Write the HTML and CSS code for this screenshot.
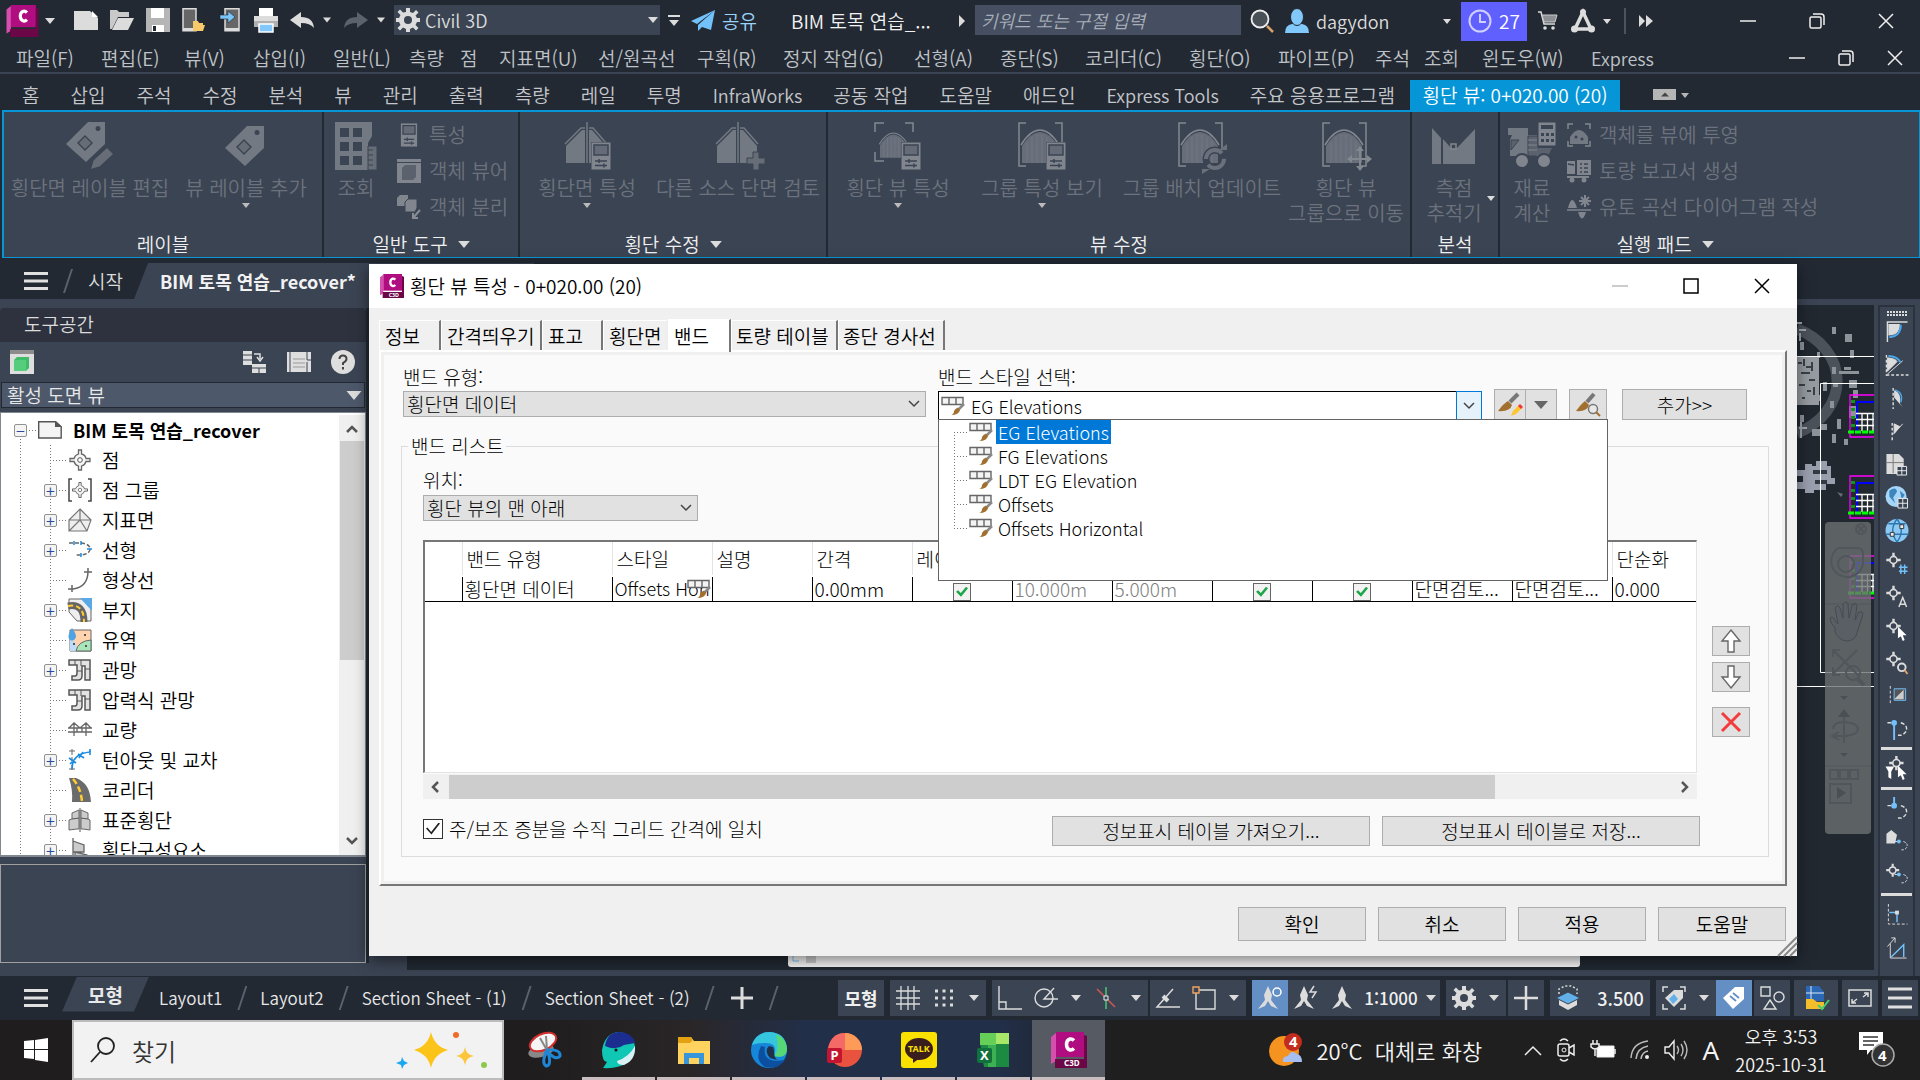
FILE: index.html
```html
<!DOCTYPE html>
<html lang="ko">
<head>
<meta charset="utf-8">
<title>Civil 3D - BIM 토목 연습_recover</title>
<link rel="stylesheet" href="styles.css">
</head>
<body>
<svg class="defs" aria-hidden="true">
  <defs>
    <symbol id="down" viewBox="0 0 10 6"><path d="M0 0h10L5 6z" fill="currentColor"/></symbol>
    <symbol id="c3d" viewBox="0 0 36 36"><path d="M0 5L5 1v28l-5 3z" fill="#d64fae"/><path d="M5 0h28v25H5z" fill="#b00d80"/><path d="M33 3l3 1v32H4v-9h29z" fill="#6b0647"/><path d="M23 8.500q-2-2-4-1.500-3.500 1-3.500 5.500t3.500 5.500q2 .5 4-1.500" fill="none" stroke="#fff" stroke-width="3.500"/></symbol>
    <symbol id="min" viewBox="0 0 16 16"><path d="M0 8h16" stroke="currentColor" stroke-width="1.500"/></symbol>
    <symbol id="restore" viewBox="0 0 16 16"><g fill="none" stroke="currentColor" stroke-width="1.500"><rect x="1" y="4" width="11" height="11" rx="1.500"/><path d="M4 1h8q3 0 3 3v8"/></g></symbol>
    <symbol id="close" viewBox="0 0 16 16"><path d="M1 1l14 14M15 1L1 15" stroke="currentColor" stroke-width="1.500"/></symbol>
    <symbol id="burger" viewBox="0 0 24 18"><path d="M0 1.500h24M0 9h24M0 16.500h24" stroke="#e0e0e0" stroke-width="3"/></symbol>
    <symbol id="gear" viewBox="0 0 24 24"><path fill="#dcdcdc" fill-rule="evenodd" d="M10 0h4v4l3 1 3-3 2.500 2.500-3 3L21 10h3v4h-3l-1.500 3 3 3L20 22.500l-3-3-3 1.500v3h-4v-3l-3-1.500-3 3L1.500 20l3-3L3 14H0v-4h3l1.500-3-3-3L4 1.500l3 3L10 4zM12 8a4 4 0 100 8 4 4 0 000-8z"/></symbol>
    <symbol id="tag" viewBox="0 0 48 48"><path fill="#737982" fill-rule="evenodd" d="M22 0h17v22L20 40 0 22zM32 4a2.500 2.500 0 100 5 2.500 2.500 0 000-5zM19 13l-8 8 8 8 8-8z"/><path d="M19 15l-6 6 6 6 6-6z" fill="#666d77"/></symbol>
    <symbol id="section" viewBox="0 0 48 48"><path fill="#737982" d="M3 24L19 8h3v33H3zM26 8h3l14 16v17H26z"/><path d="M2 22L18 6h4M26 6h4l14 16M24 0v41" fill="none" stroke="#737982" stroke-width="1.500"/></symbol>
    <symbol id="arch" viewBox="0 0 48 48"><path d="M4 24q9-14 18-14t18 14v17H4z" fill="#676e79"/><path d="M3 23Q12 8 22 8t19 15" stroke="#838890" stroke-width="1.500" fill="none"/><path d="M9 20v21M14 15v26M19 13v28M24 13v28M29 15v26M34 19v22" stroke="#737984" stroke-width="1"/></symbol>
    <symbol id="sheet" viewBox="0 0 20 28"><path d="M0 0h20v28H0z" fill="#80858e" stroke="#3b4453"/><path d="M3 3h14v10H3z" fill="#666c77" stroke="#3b4453" stroke-width="1.500"/><path d="M4 19h12M4 23.500h12M8 17v4M13 21.500v4" stroke="#3b4453" stroke-width="1.500"/></symbol>
    <symbol id="bracket" viewBox="0 0 48 48"><path d="M8 1H1v43h7M37 1h7v43h-7" fill="none" stroke="#83888f" stroke-width="1.500"/></symbol>
    <symbol id="band" viewBox="0 0 24 20"><path d="M1 1.500h21v7H1zM8 1.500v7M15 1.500v7" fill="#f4f4f4" stroke="#666" stroke-width="1.400"/><path d="M23 8l-6 6" stroke="#8a8a8a" stroke-width="2.500"/><path d="M17 11.500l2 2.500q-1 5-9 5 3-1 3-4 1-2.500 4-3.500z" fill="#a2702e"/></symbol>
    <symbol id="chev" viewBox="0 0 12 8"><path d="M1 1l5 5 5-5" fill="none" stroke="#444" stroke-width="1.500"/></symbol>
    <symbol id="pt" viewBox="0 0 24 24"><path d="M10.500 2h3v4q4 1 4.500 4.500h4v3h-4Q17 17 13.500 18v4h-3v-4Q7 17 6 13.500H2v-3h4Q7 7 10.500 6z" fill="#f5f5f5" stroke="#666" stroke-width="1.300"/><circle cx="12" cy="12" r="2.300" fill="#fff" stroke="#555"/></symbol>
    <symbol id="ptw" viewBox="0 0 24 24"><path d="M10 1v5M10 14v5M1 10h5M14 10h5" stroke="#dcdcdc" stroke-width="3"/><circle cx="10" cy="10" r="4.500" fill="none" stroke="#dcdcdc" stroke-width="2"/></symbol>
    <symbol id="pipe" viewBox="0 0 24 24"><path d="M1 2h21v20h-5V8h-3v10q0 4-4 4H4v-4h3q2 0 2-3V7H1z" fill="#e2e2e2" stroke="#555" stroke-width="1.500"/><path d="M7 2v5M13 2v6M17 11h5M9 13h5" stroke="#555"/></symbol>
    <symbol id="person" viewBox="0 0 24 24"><path d="M12 0l4 9-1 5 7 9-7-3-3-5-3 5-7 3 7-9-1-5z" fill="#dcdcdc"/></symbol>
    <symbol id="curve" viewBox="0 0 24 24"><path d="M2 6h5M16 6q6 2 6 6 0 5-6 7h-3" stroke="#dcdcdc" stroke-width="1.500" stroke-dasharray="4 2" fill="none"/><circle cx="9" cy="6" r="3" fill="#72c1fa"/></symbol>
    <symbol id="scalebox" viewBox="0 0 77 44"><path d="M77 1H53v42h24" fill="none" stroke="#f0f" stroke-width="1.300"/><path d="M77 8H60v30" fill="none" stroke="#00f" stroke-width="2"/><path d="M59 19.500h18M59 25.500h18M59 31.500h18M65 19v18M70.500 19v18M76 19v18" stroke="#fff" stroke-width="1.300"/><path d="M56 6v32" stroke="#0a9a18" stroke-width="4" stroke-dasharray="3 5"/><path d="M51 38h26" stroke="#0f0" stroke-width="3" stroke-dasharray="6 1"/></symbol>
  </defs>
</svg>

<header class="titlebar">
  <button class="app"><svg class="i35"><use href="#c3d"/></svg><svg class="ar"><use href="#down"/></svg></button>
  <div class="qat">
    <button title="새로 만들기"><svg viewBox="0 0 24 24"><path d="M0 3h16l8 7v12H0z" fill="#dcdcdc"/><path d="M18 3l6 6h-6z" fill="#fff"/></svg></button>
    <button title="열기"><svg viewBox="0 0 24 24"><path d="M0 2h7l2 2h10v5H8L2 21H0z" fill="#c9c9c9"/><path d="M8 10h16l-6 12H2z" fill="#dcdcdc"/></svg></button>
    <button title="저장"><svg viewBox="0 0 24 24"><path d="M0 0h24v24H0z" fill="#b5b5b5"/><path d="M5 0h13v10H5zM6 17h12v7H6z" fill="#fff"/><path d="M7 18h3v5H7z" fill="#222933"/></svg></button>
    <button title="모바일에서 열기"><svg viewBox="0 0 24 24"><path d="M1 .8h13v22H1z" fill="#666" stroke="#dcdcdc" stroke-width="1.500"/><path d="M1 20h13v3H1z" fill="#dcdcdc"/><path d="M11 13h5l1 2h4v2h2l-2 6H11z" fill="#f7c96b"/></svg></button>
    <button title="모바일에 저장"><svg viewBox="0 0 24 24"><path d="M7 .8h14v22H7z" fill="#666" stroke="#dcdcdc" stroke-width="1.500"/><path d="M7 20h14v3H7z" fill="#dcdcdc"/><path d="M2 7h8V3l7 6-7 6v-4H2z" fill="#79c6fb" stroke="#222933" stroke-width=".6"/></svg></button>
    <button title="플롯"><svg viewBox="0 0 24 24"><path d="M5 0h14v8H5z" fill="#fff"/><path d="M0 8h24v11H0z" fill="#dcdcdc"/><path d="M0 13h24v6H0z" fill="#b0b0b0"/><path d="M5 16h14v8H5z" fill="#83c8fa" stroke="#fff" stroke-width="1.500"/></svg></button>
    <button class="split" title="명령 취소"><svg viewBox="0 0 24 24"><path d="M0 12L11 4v5q12 0 13 11-4-5-13-5v5z" fill="#dcdcdc"/></svg><svg class="ar"><use href="#down"/></svg></button>
    <button class="split dim" title="명령 복구"><svg viewBox="0 0 24 24"><path d="M24 12L13 4v5Q1 9 0 20q4-5 13-5v5z" fill="#5c626c"/></svg><svg class="ar"><use href="#down"/></svg></button>
  </div>
  <button class="workspace"><svg class="i24"><use href="#gear"/></svg><span>Civil 3D</span><svg class="ar"><use href="#down"/></svg></button>
  <button class="more"><svg width="14" height="12" viewBox="0 0 14 12"><path d="M1 1h12" stroke="#dcdcdc" stroke-width="2"/><path d="M2 5h10l-5 6z" fill="#dcdcdc"/></svg></button>
  <button class="share"><svg class="i24" viewBox="0 0 24 24"><path d="M24 1L0 12l6 3zM24 1L7 16v6l4-4 9 3z" fill="#72c1fa"/></svg><span>공유</span></button>
  <span class="doc">BIM 토목 연습_...</span>
  <svg class="tri" viewBox="0 0 6 12"><path d="M0 0l6 6-6 6z" fill="#dcdcdc"/></svg>
  <input class="find" type="text" placeholder="키워드 또는 구절 입력" aria-label="검색">
  <svg class="i24" viewBox="0 0 24 24"><circle cx="10" cy="10" r="8.500" fill="#4a5058" stroke="#eee" stroke-width="1.800"/><path d="M17 17l6 6" stroke="#dca36a" stroke-width="2.500"/></svg>
  <button class="user"><svg class="i24" viewBox="0 0 24 24"><path d="M0 24q0-8 7-9h10q7 1 7 9z" fill="#83c8fa"/><ellipse cx="12" cy="8" rx="6.500" ry="8.500" fill="#83c8fa" stroke="#222933"/></svg><span>dagydon</span><svg class="ar sm"><use href="#down"/></svg></button>
  <button class="trial"><svg class="i24" viewBox="0 0 24 24"><circle cx="12" cy="12" r="10.500" fill="none" stroke="#cfd0ff" stroke-width="2"/><path d="M12 5v8h6" fill="none" stroke="#cfd0ff" stroke-width="2"/></svg><span>27</span></button>
  <div class="extras">
    <svg width="20" height="20" viewBox="0 0 20 20"><path d="M0 1h3l3 12h11" fill="none" stroke="#dcdcdc" stroke-width="1.500"/><path d="M4 4h15l-2 7H6z" fill="#8c8f94" stroke="#ccc"/><circle cx="7" cy="17" r="1.800" fill="#dcdcdc"/><circle cx="15" cy="17" r="1.800" fill="#dcdcdc"/></svg>
    <svg width="24" height="24" viewBox="0 0 24 24"><path d="M12 3L4 20h16z" fill="none" stroke="#dcdcdc" stroke-width="3.500"/><circle cx="12" cy="3" r="3" fill="#dcdcdc"/><circle cx="3.500" cy="20" r="3.500" fill="#dcdcdc"/><circle cx="20.500" cy="20" r="3.500" fill="#dcdcdc"/></svg>
    <svg class="ar sm"><use href="#down"/></svg>
    <i class="bar"></i>
    <svg width="14" height="12" viewBox="0 0 14 12"><path d="M0 0l6 6-6 6zM7 0l7 6-7 6z" fill="#dcdcdc"/></svg>
  </div>
  <div class="winbtns"><button aria-label="최소화"><svg><use href="#min"/></svg></button><button aria-label="복원"><svg><use href="#restore"/></svg></button><button aria-label="닫기"><svg><use href="#close"/></svg></button></div>
</header>

<nav class="menubar">
  <a href="#">파일(F)</a><a href="#">편집(E)</a><a href="#">뷰(V)</a><a href="#">삽입(I)</a><a href="#">일반(L)</a><a href="#">측량</a><a href="#">점</a><a href="#">지표면(U)</a><a href="#">선/원곡선</a><a href="#">구획(R)</a><a href="#">정지 작업(G)</a><a href="#">선형(A)</a><a href="#">종단(S)</a><a href="#">코리더(C)</a><a href="#">횡단(O)</a><a href="#">파이프(P)</a><a href="#">주석</a><a href="#">조회</a><a href="#">윈도우(W)</a><a href="#" class="lat">Express</a>
  <div class="winbtns small"><button aria-label="도면 최소화"><svg><use href="#min"/></svg></button><button aria-label="도면 복원"><svg><use href="#restore"/></svg></button><button aria-label="도면 닫기"><svg><use href="#close"/></svg></button></div>
</nav>

<nav class="ribbontabs">
  <a href="#">홈</a><a href="#">삽입</a><a href="#">주석</a><a href="#">수정</a><a href="#">분석</a><a href="#">뷰</a><a href="#">관리</a><a href="#">출력</a><a href="#">측량</a><a href="#">레일</a><a href="#">투명</a><a href="#" class="lat">InfraWorks</a><a href="#">공동 작업</a><a href="#">도움말</a><a href="#">애드인</a><a href="#" class="lat">Express Tools</a><a href="#">주요 응용프로그램</a><a href="#" class="on">횡단 뷰: 0+020.00 (20)</a>
  <button class="collapse" aria-label="리본 최소화"><svg width="36" height="12" viewBox="0 0 36 12"><path d="M0 0h23v11H0z" fill="#b5b5b5"/><path d="M8 7.500h8l-4-4z" fill="#444"/><path d="M28 4h8l-4 5z" fill="#b5b5b5"/></svg></button>
</nav>

<section class="ribbon">
  <div class="panel p1">
    <div class="tools">
      <button class="big"><svg viewBox="0 0 48 48"><use href="#tag" width="48" height="48"/><path d="M24 48l3-10 14-13 7 7-14 13z" fill="#666d77" stroke="#3b4453" stroke-width="1.500"/></svg><span>횡단면 레이블 편집</span></button>
      <button class="big"><svg viewBox="-3 -4 48 48"><use href="#tag" width="48" height="48"/></svg><span>뷰 레이블 추가</span><svg class="ar"><use href="#down"/></svg></button>
    </div>
    <h2>레이블</h2>
  </div>
  <div class="panel p2">
    <div class="tools">
      <button class="big"><svg viewBox="0 0 48 48"><path fill="#737982" fill-rule="evenodd" d="M3 0h37v14l-4 7v27H3zM8 6v9h9V6zM21 6v9h9V6zM8 20v9h9v-9zM21 20v9h9v-9zM8 34v9h9v-9zM21 34v9h9v-9z"/><path d="M36 24h9v24h-9zM36 28h5M36 33h5M36 38h5M36 43h5" fill="#666d77" stroke="#3b4453"/></svg><span>조회</span></button>
      <div class="rows">
        <button><svg viewBox="0 0 24 24"><use href="#sheet" x="3" width="18" height="24"/></svg>특성</button>
        <button><svg viewBox="0 0 24 24"><path d="M0 0h24v24H0z" fill="#80858e"/><path d="M0 3.500h24" stroke="#3b4453"/><path d="M5 9l3-3h11v12l-3 3H5z" fill="#5b626d"/></svg>객체 뷰어</button>
        <button><svg viewBox="0 0 24 24"><path d="M0 3l3-3h8v8l-2 3H0z" fill="#80858e"/><path d="M8 7l3-3h9v9l-2 4H8z" fill="#80858e" stroke="#3b4453"/><path d="M23 15l-7 8M16 18v5h5" stroke="#888d95" fill="none" stroke-width="2"/></svg>객체 분리</button>
      </div>
    </div>
    <h2>일반 도구 <svg class="ar lg"><use href="#down"/></svg></h2>
  </div>
  <div class="panel p3">
    <div class="tools">
      <button class="big"><svg viewBox="0 0 48 48"><use href="#section" width="48" height="48"/><use href="#sheet" x="28" y="20" width="20" height="28"/></svg><span>횡단면 특성</span><svg class="ar"><use href="#down"/></svg></button>
      <button class="big"><svg viewBox="0 0 48 48"><use href="#section" width="48" height="48"/><path d="M39 30h6v6h6v6h-6v6h-6v-6h-6v-6h6z" fill="#666d77" stroke="#3b4453"/></svg><span>다른 소스 단면 검토</span></button>
    </div>
    <h2>횡단 수정 <svg class="ar lg"><use href="#down"/></svg></h2>
  </div>
  <div class="panel p4">
    <div class="tools">
      <button class="big"><svg viewBox="0 0 48 48"><path d="M1 10V1h9M31 1h8v9M1 30v9h9" fill="none" stroke="#838890" stroke-width="1.500"/><use href="#arch" x="3" y="5" width="36" height="36"/><use href="#sheet" x="27" y="20" width="20" height="28"/></svg><span>횡단 뷰 특성</span><svg class="ar"><use href="#down"/></svg></button>
      <button class="big"><svg viewBox="0 0 48 48"><use href="#bracket" width="48" height="48"/><use href="#arch" width="48" height="48"/><use href="#sheet" x="28" y="20" width="20" height="28"/></svg><span>그룹 특성 보기</span><svg class="ar"><use href="#down"/></svg></button>
      <button class="big"><svg viewBox="0 0 48 48"><use href="#bracket" width="48" height="48"/><use href="#arch" width="48" height="48"/><circle cx="37" cy="37" r="9" fill="none" stroke="#3b4453" stroke-width="7"/><circle cx="37" cy="37" r="9" fill="none" stroke="#6b717b" stroke-width="4" stroke-dasharray="22 6"/><path d="M41 28h8v-6zM32 47h-8v5z" fill="#6b717b"/></svg><span>그룹 배치 업데이트</span></button>
      <button class="big"><svg viewBox="0 0 48 48"><use href="#bracket" width="48" height="48"/><use href="#arch" width="48" height="48"/><path d="M38 27v20M28 37h20" stroke="#83888f" stroke-width="2"/><path d="M38 24l4 5h-8zM38 49l4-5h-8zM25 37l5-4v8zM50 37l-5-4v8z" fill="#83888f"/></svg><span>횡단 뷰<br>그룹으로 이동</span></button>
    </div>
    <h2>뷰 수정</h2>
  </div>
  <div class="panel p5">
    <div class="tools">
      <button class="big"><svg viewBox="0 0 48 48"><path d="M2 6l9 10v26H2zM13 17l8 9h6L45 7v35H13z" fill="#737982"/><path d="M21 22h5v5h-5z" fill="#3b4453" stroke="#83888f" stroke-width="1.500"/></svg><span>측점<br>추적기</span></button>
      <svg class="ar"><use href="#down"/></svg>
    </div>
    <h2>분석</h2>
  </div>
  <div class="panel p6">
    <div class="tools">
      <button class="big"><svg viewBox="0 0 48 48"><path d="M0 6h20v7h9v21H2V18l2-5H0z" fill="#737982"/><path d="M3 28V18h8zM20 14h10v20H20z" fill="#5b626d" stroke="#3b4453"/><path d="M28 26h16l-4 8H28z" fill="#5b626d"/><path d="M20 18h9M20 23h9M20 28h9" stroke="#80858e"/><path d="M30 0h18v24H30z" fill="#80858e" stroke="#3b4453"/><path d="M33 3h12v4H33zM33 11h3v3h-3zM38 11h3v3h-3zM43 11h3v3h-3zM33 17h3v3h-3zM38 17h3v3h-3zM43 17h3v3h-3z" fill="#3b4453"/><circle cx="14" cy="39" r="7" fill="#80858e" stroke="#3b4453" stroke-width="2"/><circle cx="36" cy="39" r="7" fill="#80858e" stroke="#3b4453" stroke-width="2"/></svg><span>재료<br>계산</span></button>
      <div class="rows">
        <button><svg viewBox="0 0 24 24"><path d="M1 6V1h5M18 1h5v5M1 18v5h5M18 23h5v-5" fill="none" stroke="#838890" stroke-width="1.500"/><path d="M3 21v-7q9-14 18 0v7z" fill="#737982"/><circle cx="9" cy="14" r="1.500" fill="#3b4453"/><circle cx="15" cy="16" r="1.500" fill="#3b4453"/></svg>객체를 뷰에 투영</button>
        <button><svg viewBox="0 0 24 24"><path d="M0 2h8v13H0zM10 1h14v15H10zM0 17h22v2H0z" fill="#80858e"/><path d="M13 5h2M17 5h4M13 9h2M17 9h4M13 13h2M17 13h4M1 5l6 1" stroke="#3b4453" stroke-width="1.500"/><circle cx="5" cy="21" r="2.500" fill="#80858e"/><circle cx="17" cy="21" r="2.500" fill="#80858e"/></svg>토량 보고서 생성</button>
        <button><svg viewBox="0 0 24 24"><path d="M0 15h24" stroke="#80858e" stroke-width="1.500"/><path d="M1 13q4-16 9 0zM11 17q4 13 8 0z" fill="#80858e"/><path d="M18 0v12M12 6h12M14 2l8 8M22 2l-8 8" stroke="#80858e" stroke-width="2"/></svg>유토 곡선 다이어그램 작성</button>
      </div>
    </div>
    <h2>실행 패드 <svg class="ar lg"><use href="#down"/></svg></h2>
  </div>
</section>

<main class="workarea">
  <nav class="filetabs">
    <button aria-label="메뉴"><svg class="burger"><use href="#burger"/></svg></button><i class="slash"></i><a href="#">시작</a><a href="#" class="on">BIM 토목 연습_recover*</a>
  </nav>
  <div class="body">
    <aside class="palette">
      <h2>도구공간</h2>
      <div class="ptools">
        <svg class="i24" viewBox="0 0 24 24"><path d="M0 0h24v24H0z" fill="#dedede"/><path d="M0 0h24v4H0z" fill="#8c8c8c"/><path d="M4 10l3-3h12v11l-3 3H4z" fill="#3dbd68"/><path d="M4 10h12v11H4z" fill="#55cd7c"/></svg>
        <span class="grow"></span>
        <svg class="i24" viewBox="0 0 24 24"><path d="M0 1h9v14H0zM9 14h14v9H9z" fill="#dedede"/><path d="M0 5h9M0 10h9M9 18h14M16 18v5" stroke="#3b4453"/><path d="M11 4h6v5M14 7l3 4 3-4" stroke="#dedede" fill="none" stroke-width="1.500"/></svg>
        <svg class="i24" viewBox="0 0 24 24"><path d="M0 2h24v20H0z" fill="#dedede"/><path d="M3 2v20M20 2v8h4M20 22V12" stroke="#3b4453" fill="none"/><path d="M6 9h12M6 13h12M6 17h12" stroke="#999"/></svg>
        <svg class="i24" viewBox="0 0 24 24"><circle cx="12" cy="12" r="12" fill="#dedede"/><path d="M8.500 9q0-3.500 3.500-3.500T15.500 9q0 2-3.500 4v2M12 17v2.500" fill="none" stroke="#444" stroke-width="2"/></svg>
      </div>
      <div class="sel dark"><select aria-label="뷰"><option>활성 도면 뷰</option></select><svg class="pick"><use href="#down"/></svg></div>
      <div class="tree">
        <ul>
          <li class="root"><span class="g0"><button>−</button></span><svg viewBox="0 0 24 18"><path d="M.7.7h17l5.500 5V17H.7z" fill="#f4f4f4" stroke="#555" stroke-width="1.400"/><path d="M17 0l7 6h-7z" fill="#555"/></svg><b>BIM 토목 연습_recover</b></li>
          <li><span class="g1"></span><span class="g2"></span><svg><use href="#pt"/></svg>점</li>
          <li><span class="g1"></span><span class="g2"><button>+</button></span><svg viewBox="0 0 24 24"><path d="M4 1H1v22h3M20 1h3v22h-3" fill="none" stroke="#444" stroke-width="1.500"/><use href="#pt" x="3" y="3" width="18" height="18"/></svg>점 그룹</li>
          <li><span class="g1"></span><span class="g2"><button>+</button></span><svg viewBox="0 0 24 24"><path d="M12 1l11 11-4 11H1V12zM12 1v11M1 12h22M1 23l11-11 7 11" fill="#eee" stroke="#777" stroke-width="1.200"/></svg>지표면</li>
          <li><span class="g1"></span><span class="g2"><button>+</button></span><svg viewBox="0 0 24 24"><path d="M1 5h12q9 1 9 6t-9 6H8" fill="none" stroke="#666" stroke-width="1.500" stroke-dasharray="4 2"/><path d="M6 3v4M13 3v4M19 11h5M13 15v4" stroke="#1b8be0" stroke-width="1.500"/></svg>선형</li>
          <li><span class="g1"></span><span class="g2"></span><svg viewBox="0 0 24 24"><path d="M0 21h5Q20 19 20 3V0M16 4h8M4 17v7" fill="none" stroke="#666" stroke-width="1.500"/></svg>형상선</li>
          <li><span class="g1"></span><span class="g2"><button>+</button></span><svg viewBox="0 0 24 24"><path d="M1 1h22v22H9L1 14z" fill="#eee" stroke="#666"/><path d="M12 0h12v13z" fill="#5aa9e6"/><path d="M0 8q16-3 16 16" fill="none" stroke="#666" stroke-width="7"/><path d="M0 8q16-3 16 16" fill="none" stroke="#fc3" stroke-width="2" stroke-dasharray="5 3"/></svg>부지</li>
          <li><span class="g1"></span><span class="g2"></span><svg viewBox="0 0 24 24"><path d="M2 2h21v21H2z" fill="#ffd3ad" stroke="#666"/><path d="M2 12q8 0 6 11H2z" fill="#bcdcf8"/><path d="M8 23q2-10 15-11v11z" fill="#a6e6b8" stroke="#666"/><path d="M4 0q6 8 3 11t-6 0Q-1 8 4 0z" fill="#4fa3e3"/><path d="M16 7h2M5 16h2M17 18h2" stroke="#555" stroke-width="2"/></svg>유역</li>
          <li><span class="g1"></span><span class="g2"><button>+</button></span><svg><use href="#pipe"/></svg>관망</li>
          <li><span class="g1"></span><span class="g2"></span><svg><use href="#pipe"/></svg>압력식 관망</li>
          <li><span class="g1"></span><span class="g2"></span><svg viewBox="0 0 24 24"><path d="M0 10h24M0 14h24M6 5v13M18 5v13M1 10l5-5 6 5 6-5 5 5M9 10v4M14 10v4" fill="none" stroke="#666" stroke-width="1.300"/></svg>교량</li>
          <li><span class="g1"></span><span class="g2"><button>+</button></span><svg viewBox="0 0 24 24"><path d="M4 1v21M1 3h6M1 21h6" stroke="#666" stroke-dasharray="6 2"/><path d="M4 21Q4 5 23 4M10 6l6 4M11 10l4-6M1 10l7 5M2 16l6-6M22 1v6" fill="none" stroke="#1b8be0" stroke-width="1.600"/></svg>턴아웃 및 교차</li>
          <li><span class="g1"></span><span class="g2"></span><svg viewBox="0 0 24 24"><path d="M1 0h7q14 5 15 24H4Q5 12 1 0z" fill="#6b6b6b"/><path d="M5 1q8 9 9 23" stroke="#fc3" stroke-width="2.500" stroke-dasharray="6 3" fill="none"/></svg>코리더</li>
          <li><span class="g1"></span><span class="g2"><button>+</button></span><svg viewBox="0 0 24 24"><path d="M4 5l7-3v19H9l-8 1V12l3-1zM20 5l-7-3v19h2l7 1V12l-2-1z" fill="#ccc" stroke="#666"/><path d="M12 0v24M4 11l7-1M13 10l7 1" stroke="#555"/></svg>표준횡단</li>
          <li><span class="g1"></span><span class="g2"><button>+</button></span><svg viewBox="0 0 24 24"><path d="M5 0v24M5 3l11 4v7H5M7 14l12 3v7H7z" fill="#ccc" stroke="#666" stroke-width="1.300"/></svg>횡단구성요소</li>
        </ul>
        <div class="vscroll"><svg viewBox="0 0 12 8"><path d="M1 7l5-5 5 5" fill="none" stroke="#555" stroke-width="2.500"/></svg><i></i><svg viewBox="0 0 12 8"><path d="M1 1l5 5 5-5" fill="none" stroke="#555" stroke-width="2.500"/></svg></div>
      </div>
      <div class="preview"></div>
    </aside>
    <section class="canvas">
      <svg class="drawing" width="77" height="665" viewBox="0 0 77 665">
        <g fill="#c8ccd2" opacity=".65"><path d="M35 22h4v7h-4zM48 29h7v8h-7zM3 37h4v8H3zM20 47h3v6h-3zM53 45h4v8h-4zM35 62h4v7h-4zM47 62h7v3h-7zM42 66h20v3H42zM26 77h4v9h-4zM36 78h5v4h-5zM52 75h8v8h-8zM56 85h5v8h-5zM19 90h4v6h-4zM33 96h4v7h-4zM52 101h7v12h-7zM3 110h4v7H3zM40 114h4v10h-4zM24 119h6v6h-6zM15 124h9v7h-9zM35 129h4v9h-4zM47 134h4v6h-4z"/></g>
        <path d="M0 24A68 57 0 010 128" fill="none" stroke="#8b929b" stroke-width="11" opacity=".4"/>
        <path d="M0 52h22v48H0z" fill="#969ba1"/><path d="M1 58h4M9 62h5M4 68h9M12 75h6M2 80h6M10 86h4M5 93h3M15 57v9M7 54v7M17 82v8" stroke="#3a4048" stroke-width="2"/>
        <path d="M0 18h5M2 25h7M2 123h8M4 117v16M3 28v8" stroke="#a3a8ae" stroke-width="2"/>
        <path d="M0 165h8v-6h7v2h4v-5h11v5h4v12h4v6h-9v6H17v3H8v-4H0v-7h6v-6H0z" fill="#9a9fae"/><path d="M16 167h14M18 177h12" stroke="#343a44" stroke-width="4"/><path d="M40 187l6 2-2 3z" fill="#666c75"/>
        <path d="M0 51.500h77M77 78.500H23.500v289H77M0 381.500h77" fill="none" stroke="#fff"/>
        <use href="#scalebox" y="89" width="77" height="44"/><use href="#scalebox" y="170" width="77" height="44"/><use href="#scalebox" y="250" width="77" height="44"/>
        <g><rect x="28" y="217" width="46" height="312" rx="4" fill="#6b7072" opacity=".8"/>
          <g fill="none" stroke="#50565a" stroke-width="2"><circle cx="64" cy="224" r="5"/><path d="M61 221l6 6M67 221l-6 6"/><path d="M41 243h19q6 0 6 6v10a16 16 0 11-25-16z"/><circle cx="49" cy="259" r="8"/><path d="M28 299h46M28 461h46" stroke-width="1"/><path d="M36 345l26 26M60 345l-24 24M36 352v-7h7M36 362v8h7"/><circle cx="56" cy="368" r="7"/><path d="M61 374l6 6" stroke-width="4"/><path d="M47 410v28M36 424q0-7 11-7 14 1 14 7t-14 7H37M42 427l-7 4 7 4"/><path d="M33 465h8v9h-8zM43 465h8v9h-8zM53 465h8v9h-8zM33 479h21v19H33z"/></g>
          <path d="M38 323q-5-5-5-10 3-3 6 4l2 2-3-16q3-4 5 0l3 10v-14q3-4 5 0l1 14 3-13q4-3 5 1l-2 14 4-8q4-1 4 2l-6 19q-2 8-10 8-7 0-12-9z" fill="#5a5f66" stroke="#454b52"/><path d="M47 404l6 8H41zM43 391h8l-4 4zM43 448h8l-4 4zM40 482l9 6-9 6z" fill="#4a4f55"/>
        </g>
      </svg>
      <div class="command"><svg width="40" height="14" viewBox="0 0 40 14"><path d="M5 0v6h6" stroke="#72c1fa" fill="none"/><path d="M18 0h10v8H18z" fill="#ccc"/></svg></div>
    </section>
    <aside class="rail">
      <div class="grip"></div>
      <svg viewBox="0 0 24 24"><path d="M2 22V1h21" stroke="#dcdcdc" fill="none" stroke-width="1.500"/><path d="M3 3h12q0 12-12 12z" fill="#dcdcdc"/><path d="M16 4q0 12-12 13" stroke="#4aa8ea" fill="none" stroke-width="2"/></svg>
      <svg viewBox="0 0 24 24"><path d="M1 1v22M1 22h23" stroke="#dcdcdc" stroke-width="1.500" stroke-dasharray="3 2"/><path d="M2 4q9 1 10 4L2 18zM2 21L18 7" fill="#dcdcdc" stroke="#dcdcdc"/><path d="M3 2q9 0 13 7" stroke="#4aa8ea" fill="none" stroke-width="2"/></svg>
      <svg viewBox="0 0 24 24"><path d="M8 1v22" stroke="#dcdcdc" stroke-width="1.500" stroke-dasharray="3 2"/><path d="M9 3q8 3 6 14l3 4-9-10z" fill="#dcdcdc"/><path d="M10 3q9 3 6 13" stroke="#4aa8ea" fill="none" stroke-width="1.500"/></svg>
      <svg viewBox="0 0 24 24"><path d="M7 3v20" stroke="#dcdcdc" stroke-width="1.500" stroke-dasharray="3 2"/><path d="M9 4l6 3-6 7zM8 15L18 4" fill="#dcdcdc" stroke="#dcdcdc"/></svg>
      <svg viewBox="0 0 24 24"><path d="M1 1h13l5 5v16H1z" fill="#dcdcdc"/><path d="M1 10h18M8 1v20" stroke="#777"/><path d="M12 14h10v9H12zM17 14v9M12 18.500h10" fill="#3b4453" stroke="#eee"/></svg>
      <svg viewBox="0 0 24 24"><circle cx="11" cy="11" r="11" fill="#a7d5f7"/><path d="M4 5q7-5 8 1l-4 6 2 6-6-7zM15 5l5 4-3 5z" fill="#3a86bd"/><path d="M13 13h10v10H13zM18 13v10M13 18h10" fill="#3b4453" stroke="#eee"/></svg>
      <svg viewBox="0 0 24 24"><circle cx="12" cy="12" r="12" fill="#8cc9f4"/><path d="M3 5h18M0 16h24M12 0q-9 12 0 24M12 0q9 12 0 24" fill="none" stroke="#2e77ae" stroke-width="1.500"/><path d="M15 6h4v4h-4zM5 14h4v4H5z" fill="#eee" stroke="#333"/></svg>
      <svg viewBox="0 0 24 24"><use href="#ptw" width="20" height="20"/><path d="M16 13v10M20 13v10M14 16h9M14 20h9" stroke="#72c1fa" stroke-width="1.500"/></svg>
      <svg viewBox="0 0 24 24"><use href="#ptw" width="20" height="20"/><path d="M14 23l4-10 4 10M15 20h6" fill="none" stroke="#dcdcdc" stroke-width="1.500"/></svg>
      <svg viewBox="0 0 24 24"><use href="#ptw" width="20" height="20"/><path d="M13 9l9 9h-4l2 5-2 1-2-5-3 2z" fill="#fff"/></svg>
      <svg viewBox="0 0 24 24"><use href="#ptw" width="20" height="20"/><circle cx="17" cy="17" r="4" fill="#3b4453" stroke="#dcdcdc" stroke-width="2"/><path d="M20 20l3 4" stroke="#dca36a" stroke-width="2"/></svg>
      <svg viewBox="0 0 24 24"><path d="M5 2v20" stroke="#dcdcdc" stroke-dasharray="3 2"/><path d="M9 5h12v12H9z" fill="#555" stroke="#72c1fa"/><path d="M9 16L19 6v10z" fill="#ccc"/></svg>
      <svg viewBox="0 0 24 24"><use href="#curve"/><path d="M9 6v18" stroke="#72c1fa" stroke-width="2"/></svg>
      <hr>
      <svg viewBox="0 0 24 24"><use href="#ptw" x="3" y="-2" width="20" height="20"/><path d="M0 10h9l-3 5v8l-3-2v-6zM13 9l9 9h-4l2 5-2 1-2-5-3 2z" fill="#fff"/></svg>
      <hr>
      <svg viewBox="0 0 24 24"><path d="M9 0v8" stroke="#72c1fa" stroke-width="2"/><use href="#curve" y="3" width="24" height="24"/></svg>
      <svg viewBox="0 0 24 24"><path d="M6 0l6 5-2 9H1V4z" fill="#dcdcdc"/><use href="#curve" x="8" y="8" width="16" height="16"/></svg>
      <svg viewBox="0 0 24 24"><use href="#ptw" width="18" height="18"/><use href="#curve" x="8" y="8" width="16" height="16"/></svg>
      <hr>
      <svg viewBox="0 0 24 24"><path d="M3 1v21h20" stroke="#dcdcdc" fill="none" stroke-dasharray="3 2"/><path d="M4 10h8v10" stroke="#72c1fa" fill="none" stroke-width="1.500"/><path d="M10 8h4v4h-4z" fill="#dcdcdc"/></svg>
      <svg viewBox="0 0 24 24"><path d="M5 8v15h17M2 11l8-9M10 2v5M10 2H6" stroke="#dcdcdc" fill="none"/><path d="M6 22L19 9v13" stroke="#72c1fa" fill="none" stroke-width="1.500"/></svg>
    </aside>
  </div>
</main>

<footer class="status">
  <button class="menu" aria-label="배치 메뉴"><svg class="burger"><use href="#burger"/></svg></button>
  <nav class="layouts"><a href="#" class="on">모형</a><a href="#">Layout1</a><i class="slash"></i><a href="#">Layout2</a><i class="slash"></i><a href="#">Section Sheet - (1)</a><i class="slash"></i><a href="#">Section Sheet - (2)</a><i class="slash"></i><button aria-label="새 배치"><svg width="22" height="22" viewBox="0 0 22 22"><path d="M11 0v22M0 11h22" stroke="#dcdcdc" stroke-width="3"/></svg></button><i class="slash"></i></nav>
  <div class="groups">
    <div class="grp"><button class="w46"><b>모형</b></button></div>
    <div class="grp wide"><button><svg viewBox="0 0 24 24"><path d="M5 0v24M12 0v24M18 0v24M0 5h24M0 12h24M0 18h24" stroke="#dcdcdc" stroke-width="1.300"/></svg></button><button><svg viewBox="0 0 24 24"><path d="M3 5h18M3 12h18M3 19h18" stroke="#dcdcdc" stroke-width="3" stroke-dasharray="3 4.500"/></svg></button><button class="w24"><svg class="ar"><use href="#down"/></svg></button></div>
    <div class="grp wide"><button><svg viewBox="0 0 24 24"><path d="M1 0v23h23M1 16h7v7" fill="none" stroke="#dcdcdc" stroke-width="1.400"/></svg></button><button><svg viewBox="0 0 24 24"><circle cx="10" cy="12" r="9" fill="none" stroke="#dcdcdc" stroke-width="1.400"/><path d="M24 13H10L20 2" fill="none" stroke="#dcdcdc" stroke-width="1.400"/></svg></button><button class="w24"><svg class="ar"><use href="#down"/></svg></button><button><svg viewBox="0 0 24 24"><path d="M3 3l18 18" stroke="#d35a50" stroke-width="1.400"/><path d="M12 1v22" stroke="#4cd07e" stroke-width="1.400"/><path d="M10 10h4v4h-4z" fill="#3b4453" stroke="#eee"/></svg></button><button class="w24"><svg class="ar"><use href="#down"/></svg></button></div>
    <div class="grp"><button><svg viewBox="0 0 24 24"><path d="M17 3L1 21h23" fill="none" stroke="#dcdcdc" stroke-width="1.500"/><path d="M7 10l5 5" stroke="#dcdcdc" stroke-width="4"/></svg></button><button><svg viewBox="0 0 24 24"><path d="M5 4h18v19H4V5" fill="none" stroke="#dcdcdc" stroke-width="1.400"/><path d="M1 1h6v6H1z" fill="#3b4453" stroke="#f0a35e" stroke-width="1.400"/></svg></button><button class="w24"><svg class="ar"><use href="#down"/></svg></button></div>
    <div class="grp wide"><button class="on"><svg viewBox="0 0 24 24"><use href="#person" x="-2" width="24" height="24"/><circle cx="19" cy="6" r="4" fill="none" stroke="#fff" stroke-width="1.500"/></svg></button><button><svg viewBox="0 0 24 24"><use href="#person" x="-2" width="24" height="24"/><path d="M20 0l-4 6h6l-4 6" fill="none" stroke="#dcdcdc" stroke-width="1.500"/></svg></button><button><svg><use href="#person"/></svg></button><button class="w80">1:1000 <svg class="ar"><use href="#down"/></svg></button></div>
    <div class="grp wide"><button><svg><use href="#gear"/></svg></button><button class="w24"><svg class="ar"><use href="#down"/></svg></button></div>
    <div class="grp"><button><svg viewBox="0 0 24 24"><path d="M12 0v24M0 12h24" stroke="#dcdcdc" stroke-width="2.500"/></svg></button></div>
    <div class="grp wide"><button class="w100"><svg viewBox="0 0 24 24"><path d="M12 9l9 5v5l-9 5-9-5v-5z" fill="#dcdcdc"/><path d="M12 6l12 6-12 6L0 12z" fill="#62b0ea" stroke="#3b4453"/><path d="M3 8V3l6-3h6l6 3v5" fill="none" stroke="#dcdcdc" stroke-width="1.500" stroke-dasharray="2 2"/></svg>3.500</button></div>
    <div class="grp wide"><button><svg viewBox="0 0 24 24"><path d="M1 6V1h5M18 1h5v5M1 18v5h5M18 23h5v-5" fill="none" stroke="#dcdcdc" stroke-width="1.500"/><path d="M12 4h9v8l-9 9-9-9z" fill="#dcdcdc"/><path d="M12 8l4 5-5 5-4-5z" fill="#62b0ea"/></svg></button><button class="w24"><svg class="ar"><use href="#down"/></svg></button><button class="on"><svg viewBox="0 0 24 24"><path d="M13 1h9v12L11 23 1 12z" fill="#fff"/><path d="M8 10l6 5M11 7l6 5" stroke="#648fc4" stroke-width="1.800"/></svg></button></div>
    <div class="grp"><button><svg viewBox="0 0 24 24"><path d="M1 1h9v9H1zM10 14l6 9H4z" fill="none" stroke="#dcdcdc" stroke-width="1.400"/><circle cx="19" cy="11" r="5" fill="none" stroke="#dcdcdc" stroke-width="1.400"/></svg></button></div>
    <div class="grp mid"><button class="w44"><svg viewBox="0 0 24 24"><path d="M2 0h13l5 6v9H2z" fill="#2b67b2"/><path d="M7 0v13M2 7h18" stroke="#dbe9fa"/><path d="M2 13h7l4 3h7v7H2z" fill="#f4bd2c"/><path d="M14 19l4 4 7-9" fill="none" stroke="#42cf73" stroke-width="2"/></svg></button></div>
    <div class="grp mid"><button><svg viewBox="0 0 24 24"><path d="M1 4h22v16H1z" fill="none" stroke="#dcdcdc" stroke-width="1.500"/><path d="M4 17l5-4M4 13v4h4M20 7l-5 4M20 11V7h-4" fill="none" stroke="#dcdcdc" stroke-width="1.500"/></svg></button></div>
    <div class="grp mid"><button aria-label="사용자화"><svg viewBox="0 0 24 24"><path d="M0 3h24M0 12h24M0 21h24" stroke="#e0e0e0" stroke-width="3"/></svg></button></div>
  </div>
</footer>

<div class="taskbar">
  <button class="start" aria-label="시작"><svg class="i24" viewBox="0 0 24 24"><path d="M0 3l10-1v9H0zM11 2l13-2v11H11zM0 12h10v9L0 20zM11 12h13v12l-13-2z" fill="#fff"/></svg></button>
  <label class="search"><svg width="26" height="26" viewBox="0 0 26 26"><circle cx="16" cy="9" r="8" fill="none" stroke="#222" stroke-width="1.800"/><path d="M10 15L1 25" stroke="#222" stroke-width="1.800"/></svg><input type="text" placeholder="찾기"><svg width="94" height="38" viewBox="0 0 94 38"><path d="M35 1q3 14 17 18-14 4-17 18-3-14-17-18 14-4 17-18z" fill="#fcc419"/><path d="M69 16q1 8 9 9-8 1-9 9-1-8-9-9 8-1 9-9z" fill="#fcc53a"/><path d="M6 26l2 4 4 2-4 2-2 4-1-4-5-2 5-2z" fill="#1aa7f0"/><circle cx="60" cy="4" r="3" fill="#f06a2a"/><circle cx="88" cy="34" r="3" fill="#8cc84b"/></svg></label>
  <div class="apps">
    <button class="idle"><svg viewBox="0 0 36 36"><ellipse cx="14" cy="19" rx="13" ry="6" fill="#888" transform="rotate(-15 14 19)"/><ellipse cx="16" cy="10" rx="14" ry="8" fill="#f5f5f5" stroke="#d22f2f" stroke-width="2" transform="rotate(-25 16 10)"/><path d="M13 6l8 14M19 4l1 14" stroke="#888" stroke-width="2"/><path d="M20 18q14-1 13 6-4 5-12-4 4 14-2 14-5-3 1-16z" fill="none" stroke="#1f86d6" stroke-width="3"/></svg></button>
    <button><svg viewBox="0 0 36 36"><path d="M1 18q0 12 5 12l-4 6q16 1 25-6 10-9 6-20-4-9-15-10Q4 1 1 18z" fill="#10c6b4"/><path d="M4 14Q6 0 19 0q13 1 15 11l-11 2q-8 6-19 1z" fill="#1b2d8f"/><path d="M34 14q1 14-11 19-7 0-7-4 12-4 18-15z" fill="#d9f0f4"/><circle cx="15" cy="18" r="1.500" fill="#111"/></svg></button>
    <button><svg viewBox="0 0 36 36"><path d="M2 5h13l3 4h16v23H2z" fill="#ffd35e"/><path d="M2 5h13l2 3-3 3H2z" fill="#e2a212"/><path d="M8 21h20v11h-5v-6H13v6H8z" fill="#3795dc"/></svg></button>
    <button><svg viewBox="0 0 36 36"><circle cx="18" cy="18" r="18" fill="#1686d8"/><path d="M1 13Q5 0 19 0q16 1 17 17-1 10-13 7 5-14-10-13Q5 11 1 13z" fill="#35c5dd"/><path d="M25 2q11 5 11 16-1 9-13 6 6-5 2-22z" fill="#57d877"/><path d="M14 15q-3 17 20 13-7 10-20 7Q3 28 10 14z" fill="#0d4f9f"/><path d="M18 14q-5 5 1 12l7 2q-3-3-3-7t-1-6z" fill="#222f49"/></svg></button>
    <button><svg viewBox="0 0 36 36"><circle cx="19" cy="18" r="17" fill="#e9523f"/><path d="M19 1a17 17 0 0117 17H19z" fill="#ff9b58"/><path d="M19 1q-14 0-17 16l17 1z" fill="#f56a66"/><rect x="1" y="16" width="15" height="15" rx="2" fill="#c3152f"/><text x="4.500" y="28" class="appletter">P</text></svg></button>
    <button><svg viewBox="0 0 36 36"><rect width="36" height="36" rx="3" fill="#fbe100"/><ellipse cx="18" cy="17" rx="14" ry="11" fill="#3a1d1d"/><path d="M12 25v6l7-5z" fill="#3a1d1d"/><text x="7" y="20" class="talk">TALK</text></svg></button>
    <button><svg viewBox="0 0 36 36"><path d="M4 1h29v34H8q-4-18-4-34z" fill="#1d8a42"/><path d="M4 1h16v12H4z" fill="#65cf58"/><path d="M20 1h13v11H20z" fill="#a7e868"/><path d="M12 13h8v22h-8z" fill="#3db054"/><rect x="1" y="16" width="15" height="15" rx="2" fill="#10713c"/><text x="4" y="28" class="appletter">X</text></svg></button>
    <button class="on"><svg viewBox="0 0 36 36"><use href="#c3d" width="36" height="36"/><text x="13" y="34" class="tiny">C3D</text></svg></button>
  </div>
  <div class="tray">
    <svg width="34" height="34" viewBox="0 0 34 34"><circle cx="16" cy="18" r="15" fill="#f59321"/><path d="M15 29q-1-6 5-6 3-7 9-2 5 1 5 8z" fill="#a6bff0"/><circle cx="25" cy="9" r="9" fill="#c22b1e"/><text x="21" y="14" class="badge">4</text></svg>
    <span class="weather">20°C&nbsp; 대체로 화창</span>
    <svg width="18" height="11" viewBox="0 0 18 11"><path d="M1 10l8-8 8 8" fill="none" stroke="#eee" stroke-width="1.500"/></svg>
    <svg width="20" height="24" viewBox="0 0 20 24"><rect x="2" y="6" width="11" height="12" rx="2" fill="none" stroke="#eee" stroke-width="1.500"/><path d="M13 10l5-3v10l-5-3M4 3q4-4 8 0M4 21q4 4 8 0" fill="none" stroke="#eee" stroke-width="1.500"/><circle cx="8" cy="12" r="2" fill="none" stroke="#eee"/></svg>
    <svg width="26" height="20" viewBox="0 0 26 20"><path d="M7 6h17v11H7z" fill="#fff" stroke="#eee"/><path d="M25 9v5M3 0v4M7 0v4M1 4h8v3q-4 4-8 0zM5 9v7" stroke="#eee" stroke-width="1.500" fill="#222"/></svg>
    <svg width="20" height="20" viewBox="0 0 20 20"><path d="M1 18Q2 3 18 1M6 19Q7 8 18 6M11 19q1-7 7-8" fill="none" stroke="#bbb" stroke-width="1.500"/><circle cx="17" cy="17" r="2" fill="#eee"/></svg>
    <svg width="24" height="20" viewBox="0 0 24 20"><path d="M1 7h4l5-6v18l-5-6H1z" fill="none" stroke="#eee" stroke-width="1.400"/><path d="M13 6q3 4 0 8M17 4q4 6 0 12M20 1q6 9 0 18" fill="none" stroke="#bbb" stroke-width="1.400"/></svg>
    <span class="ime">A</span>
    <time>오후 3:53<br>2025-10-31</time>
    <svg class="note" width="38" height="38" viewBox="0 0 38 38"><path d="M1 1h24v18H13l-4 5v-5H1z" fill="#fff"/><path d="M5 6h15M5 10h15M5 14h11" stroke="#333" stroke-width="1.500"/><circle cx="25" cy="24" r="11" fill="#333" stroke="#aaa" stroke-width="1.500"/><text x="20" y="30" class="badge">4</text></svg>
  </div>
</div>

<section class="dialog" role="dialog" aria-labelledby="dt">
  <header><svg class="i24" viewBox="0 0 36 36"><use href="#c3d" width="36" height="36"/><text x="13" y="34" class="tiny">C3D</text></svg><h1 id="dt">횡단 뷰 특성 - 0+020.00 (20)</h1>
    <div class="winbtns"><button class="off" disabled aria-label="최소화"><svg><use href="#min"/></svg></button><button aria-label="최대화"><svg viewBox="0 0 16 16"><path d="M1 1h14v14H1z" fill="none" stroke="#000" stroke-width="1.500"/></svg></button><button aria-label="닫기"><svg><use href="#close"/></svg></button></div></header>
  <div class="tabs" role="tablist"><button>정보</button><button>간격띄우기</button><button>표고</button><button>횡단면</button><button class="on">밴드</button><button>토량 테이블</button><button>종단 경사선</button></div>
  <div class="page">
    <div class="fields">
      <div class="f1"><label for="bt">밴드 유형:</label><div class="sel"><select id="bt"><option>횡단면 데이터</option></select><svg class="pick"><use href="#chev"/></svg></div></div>
      <div class="f2"><label for="bs">밴드 스타일 선택:</label>
        <div class="combo"><svg class="band"><use href="#band"/></svg><input id="bs" type="text" value="EG Elevations"><button aria-label="목록 열기"><svg><use href="#chev"/></svg></button>
          <ul class="popup" role="listbox"><li class="on"><svg class="band"><use href="#band"/></svg><span>EG Elevations</span></li><li><svg class="band"><use href="#band"/></svg><span>FG Elevations</span></li><li><svg class="band"><use href="#band"/></svg><span>LDT EG Elevation</span></li><li><svg class="band"><use href="#band"/></svg><span>Offsets</span></li><li><svg class="band"><use href="#band"/></svg><span>Offsets Horizontal</span></li></ul>
        </div></div>
      <div class="split2"><button class="btn" aria-label="스타일 편집"><svg width="24" height="24" viewBox="0 0 24 24"><path d="M20 1l-8 8" stroke="#777" stroke-width="4"/><path d="M10 8l4 4q-2 7-14 6 6-8 10-10z" fill="#a2702e"/><path d="M13 23l2-5 6-6 3 3-6 6z" fill="#ffc52e"/><path d="M20 13l2-2 3 3-2 2z" fill="#f03535"/></svg></button><button class="btn" aria-label="스타일 메뉴"><svg width="14" height="8" viewBox="0 0 14 8"><path d="M0 0h14L7 8z" fill="#666"/></svg></button></div>
      <button class="btn pickbtn" aria-label="스타일 선택"><svg width="24" height="24" viewBox="0 0 24 24"><path d="M18 1l-7 8" stroke="#777" stroke-width="4"/><path d="M9 8l4 4q-2 7-13 6 6-8 9-10z" fill="#a2702e"/><circle cx="17" cy="16" r="4.500" fill="#e8e8e8" stroke="#777" stroke-width="1.500"/><path d="M20 19l4 4" stroke="#a2702e" stroke-width="2"/></svg></button>
      <button class="btn add">추가&gt;&gt;</button>
    </div>
    <fieldset>
      <legend>밴드 리스트</legend>
      <label for="pos">위치:</label>
      <div class="sel pos"><select id="pos"><option>횡단 뷰의 맨 아래</option></select><svg class="pick"><use href="#chev"/></svg></div>
      <div class="listrow">
        <div class="list">
          <div class="tablebox"><table>
            <colgroup><col class="c0"><col class="c1"><col span="10" class="cn"><col></colgroup>
            <thead><tr><th></th><th>밴드 유형</th><th>스타일</th><th>설명</th><th>간격</th><th>레이블</th><th></th><th></th><th></th><th></th><th></th><th></th><th>단순화</th></tr></thead>
            <tbody><tr><td></td><td>횡단면 데이터</td><td class="sty"><div><span>Offsets Hori</span><svg class="band"><use href="#band"/></svg></div></td><td></td><td>0.00mm</td><td class="ck"><input type="checkbox" checked aria-label="레이블 표시"></td><td class="gray">10.000m</td><td class="gray">5.000m</td><td class="ck"><input type="checkbox" checked aria-label="시작 레이블"></td><td class="ck"><input type="checkbox" checked aria-label="끝 레이블"></td><td>단면검토...</td><td>단면검토...</td><td>0.000</td></tr></tbody>
          </table></div>
          <div class="hscroll"><svg viewBox="0 0 8 12"><path d="M7 1L2 6l5 5" fill="none" stroke="#555" stroke-width="2.500"/></svg><i></i><svg viewBox="0 0 8 12"><path d="M1 1l5 5-5 5" fill="none" stroke="#555" stroke-width="2.500"/></svg></div>
        </div>
        <div class="side"><button class="btn" aria-label="위로"><svg viewBox="0 0 20 24"><path d="M10 1l9 11h-6v11H7V12H1z" fill="#fff" stroke="#666" stroke-width="1.400"/></svg></button><button class="btn" aria-label="아래로"><svg viewBox="0 0 20 24"><path d="M10 23l9-11h-6V1H7v11H1z" fill="#fff" stroke="#666" stroke-width="1.400"/></svg></button><button class="btn del" aria-label="삭제"><svg viewBox="0 0 20 20"><path d="M1 1l18 18M19 1L1 19" stroke="#f43b3b" stroke-width="3"/></svg></button></div>
      </div>
      <div class="under"><input type="checkbox" id="match" checked><label for="match">주/보조 증분을 수직 그리드 간격에 일치</label><button class="btn">정보표시 테이블 가져오기...</button><button class="btn">정보표시 테이블로 저장...</button></div>
    </fieldset>
  </div>
  <footer><button class="btn">확인</button><button class="btn">취소</button><button class="btn">적용</button><button class="btn">도움말</button></footer>
  <svg class="resize" viewBox="0 0 20 20"><path d="M1 20L20 1M7 20L20 7M13 20l7-7" stroke="#888" stroke-width="2"/></svg>
</section>
</body>
</html>
```
FILE: styles.css
```css
:root {
  --dark: #222933;
  --slate: #3b4453;
  --blue: #0696d7;
  --text: #dcdcdc;
}
* { box-sizing: border-box; }
body {
  margin: 0;
  height: 100vh;
  display: flex;
  flex-direction: column;
  overflow: hidden;
  background: var(--dark);
  color: var(--text);
  font: 19px/24px "Noto Sans CJK KR", sans-serif;
  font-weight: 350;
}
button, input, select { font: inherit; color: inherit; }
button { background: none; border: 0; padding: 0; display: flex; align-items: center; justify-content: center; }
a { color: inherit; text-decoration: none; white-space: nowrap; }
h1, h2 { margin: 0; font: inherit; }
svg { display: block; flex: none; overflow: visible; }
ul { list-style: none; margin: 0; padding: 0; }
.defs { width: 0; height: 0; position: absolute; }
.ar { width: 10px; height: 6px; color: var(--text); }
.ar.sm { width: 8px; height: 5px; }
.ar.lg { width: 12px; height: 7px; }
.i24 { width: 24px; height: 24px; }
.burger { width: 24px; height: 18px; }
.lat { font-size: 18px; }

/* Title bar */
.titlebar { height: 42px; flex: none; display: flex; align-items: center; padding-left: 5px; white-space: nowrap; }
.app { width: 69px; gap: 5px; justify-content: flex-start; }
.i35 { width: 35px; height: 32px; }
.qat { display: flex; gap: 12px; width: 320px; padding-bottom: 2px; }
.qat svg:first-child { width: 24px; height: 24px; }
.qat .split { gap: 9px; width: 42px; justify-content: flex-start; }
.qat .ar { width: 8px; }
.qat .dim { color: #999; }
.workspace { width: 266px; height: 30px; margin-bottom: 2px; padding: 0 2px; gap: 5px; background: var(--slate); justify-content: flex-start; font-size: 18px; }
.workspace .ar { margin-left: auto; }
.more { width: 31px; padding-right: 4px; }
.share { gap: 7px; width: 100px; color: #9ad2fa; justify-content: flex-start; }
.doc { width: 168px; color: #f2f2f2; }
.tri { width: 6px; height: 12px; margin-right: 10px; }
.find { width: 266px; height: 30px; margin: 0 9px 2px 0; border: 0; padding: 0 6px; background: #464f62; font-style: italic; font-size: 18px; }
.find::placeholder { color: #a9afb9; opacity: 1; }
.user { flex: 1; margin-left: 11px; gap: 7px; justify-content: flex-start; font-size: 18px; }
.user .ar { margin-left: auto; margin-right: 10px; }
.trial { width: 66px; height: 39px; gap: 7px; background: #6060ff; color: #fff; }
.extras { display: flex; align-items: center; width: 186px; padding-left: 11px; gap: 13px; }
.extras .ar { margin-left: -5px; }
.extras .bar { width: 2px; height: 26px; background: #4b5361; }
.winbtns { display: flex; color: #eee; }
.winbtns button { width: 69px; height: 40px; }
.winbtns svg { width: 16px; height: 16px; }

/* Menu bar */
.menubar {
  height: 32px;
  flex: none;
  border-bottom: 2px solid var(--slate);
  display: grid;
  grid-template-columns: 85px 83px 69px 80px 76px 51px 39px 99px 99px 86px 131px 86px 85px 104px 89px 97px 49px 58px 109px 1fr auto;
  align-items: center;
  padding: 2px 0 0 16px;
  color: #bfc2c6;
}
.winbtns.small button { width: 49px; height: 26px; }
.winbtns.small { margin-right: 1px; }

/* Ribbon */
.ribbontabs { height: 36px; flex: none; display: flex; align-items: flex-end; padding-left: 6px; color: #c4c6ca; }
.ribbontabs a { padding: 0 15px 0 16px; height: 30px; line-height: 30px; }
.ribbontabs .on { background: var(--blue); color: #fff; width: 210px; text-align: center; padding: 0; }
.collapse { height: 30px; margin-left: 33px; }
.ribbon { height: 148px; flex: none; margin-left: 2px; border: 2px solid var(--blue); border-width: 2px 1px 1px 2px; display: flex; background: var(--slate); }
.panel { display: flex; flex-direction: column; border-right: 2px solid var(--dark); }
.p1 { width: 320px; } .p2 { width: 196px; } .p3 { width: 308px; } .p4 { width: 584px; } .p5 { width: 88px; } .p6 { flex: 1; border: 0; }
.tools { flex: 1; display: flex; color: #6c727d; font-size: 20px; }
.panel h2 { height: 26px; display: flex; gap: 10px; align-items: center; justify-content: center; color: #f0f0f0; }
.p6 h2 { width: 330px; }
.big { flex-direction: column; justify-content: flex-start; padding-top: 10px; line-height: 25px; white-space: nowrap; }
.big > svg:first-child { width: 48px; height: 48px; margin-bottom: 5px; }
.big .ar { width: 8px; height: 5px; margin-top: 3px; color: #bbb; }
.p1 .big { width: 172px; } .p1 .big + .big { width: 140px; }
.p2 .big, .p6 .big { width: 64px; }
.p3 .big { width: 134px; } .p3 .big + .big { width: 168px; }
.p4 .big { width: 140px; } .p4 .big + .big { width: 148px; } .p4 .big:nth-child(3) { width: 172px; } .p4 .big:last-child { width: 116px; }
.p5 .big { width: 84px; }
.p5 .tools { align-items: flex-start; }
.p5 .tools > .ar { width: 8px; height: 5px; margin: 84px 0 0 -9px; }
.rows { padding: 5px 0 0 9px; }
.p6 .rows { padding-left: 3px; }
.rows button { height: 36px; gap: 8px; white-space: nowrap; }
.rows svg { width: 24px; height: 24px; }

/* Drawing file tabs and work area */
.workarea { flex: 1; display: flex; flex-direction: column; min-height: 0; padding-top: 5px; }
.filetabs { height: 36px; flex: none; display: flex; align-items: center; padding-left: 24px; }
.slash { width: 10px; height: 24px; clip-path: polygon(80% 0, 100% 0, 20% 100%, 0 100%); background: #5a6270; flex: none; }
.filetabs .slash { margin: 0 15px; }
.filetabs a { width: 46px; }
.filetabs .on { width: 400px; line-height: 36px; padding-left: 26px; background: var(--slate); clip-path: polygon(14px 0, 100% 0, 100% 100%, 0 100%); color: #f2f2f2; font-weight: 700; font-size: 18px; }
.body { flex: 1; min-height: 0; display: flex; background: var(--slate); }
.palette { width: 369px; flex: none; margin: 9px 0 13px; border-right: 3px solid var(--dark); display: flex; flex-direction: column; }
.palette h2 { height: 34px; line-height: 31px; padding-left: 24px; background: #2e323e; border-radius: 4px 4px 0 0; }
.ptools { display: flex; gap: 20px; height: 40px; align-items: center; padding: 0 11px 0 10px; }
.grow { flex: 1; }
.sel { display: grid; align-items: center; }
.sel select, .sel .pick { grid-area: 1 / 1; }
.sel select { appearance: none; width: 100%; height: 26px; border: 1px solid #adadad; border-radius: 0; background: #e1e1e1; color: #000; padding: 0 3px; line-height: 24px; }
.sel .pick { justify-self: end; margin-right: 6px; width: 12px; height: 8px; pointer-events: none; }
.sel.dark { margin: 0 1px; }
.sel.dark select { background: #4d586b; border-color: var(--dark); color: #e8e8e8; padding: 0 5px; }
.sel.dark .pick { width: 16px; height: 9px; margin-right: 3px; }
.tree { flex: 1; min-height: 0; margin-top: 4px; overflow: hidden; display: flex; background: #fff; border: 1px solid #828790; border-width: 1px 1px 2px; color: #000; padding-top: 2px; }
.tree ul { flex: 1; }
.tree li { height: 30px; display: flex; align-items: center; white-space: nowrap; line-height: 30px; }
.tree b { font-size: 18px; }
.tree li > svg { width: 24px; height: 24px; margin-right: 10px; }
.tree .root > svg { height: 18px; margin: 0 11px 0 0; }
.g0 { width: 37px; height: 30px; display: flex; align-items: center; padding-left: 13px; background: repeating-linear-gradient(90deg, #777 0 1px, transparent 1px 3px) 28px 15px / 8px 1px no-repeat, repeating-linear-gradient(#777 0 1px, transparent 1px 3px) 19px 15px / 1px 15px no-repeat; }
.g1 { width: 39px; height: 30px; background: repeating-linear-gradient(#777 0 1px, transparent 1px 3px) 19px 0 / 1px 30px no-repeat; }
.g2 { width: 28px; height: 30px; display: flex; align-items: center; padding-left: 4px; background: repeating-linear-gradient(90deg, #777 0 1px, transparent 1px 3px) 10px 15px / 16px 1px no-repeat, repeating-linear-gradient(#777 0 1px, transparent 1px 3px) 10px 0 / 1px 30px no-repeat; }
.tree li button { width: 13px; height: 13px; border: 1px solid #919191; background: #f4f4f4; color: #2a4b9b; font-size: 16px; line-height: 11px; border-radius: 2px; }
.vscroll { width: 26px; background: #f0f0f0; display: flex; flex-direction: column; align-items: center; padding: 10px 0; gap: 8px; }
.vscroll svg { width: 12px; height: 8px; }
.vscroll i { width: 24px; height: 219px; flex: none; background: #cdcdcd; margin-bottom: auto; }
.preview { height: 99px; margin-top: 7px; border: 1px solid #a0a0a0; flex: none; }
.canvas { flex: 1; min-width: 0; margin: 6px 0 6px 38px; background: #212830; display: grid; overflow: hidden; }
.canvas > * { grid-area: 1 / 1; }
.drawing { justify-self: end; }
.command { align-self: end; width: 792px; height: 30px; margin: 0 0 3px 381px; background: #f5f5f5; border-radius: 3px; padding-top: 18px; }
.rail { width: 37px; margin: 6px 5px 0 4px; border: 2px solid #2b323d; border-width: 2px 2px 0; display: flex; flex-direction: column; align-items: center; overflow: hidden; flex: none; }
.rail .grip { width: 20px; height: 5px; margin: 4px 0 0; flex: none; background: repeating-linear-gradient(90deg, transparent 0 2px, var(--slate) 2px 3px), linear-gradient(#dcdcdc 0 2px, transparent 2px 3px, #dcdcdc 3px); }
.rail svg { width: 24px; height: 23px; margin: 5px 0; }
.rail hr { width: 31px; height: 3px; margin: 2px 0; border: 0; background: #dcdcdc; flex: none; }

/* Status bar */
.status { height: 44px; flex: none; display: flex; align-items: center; justify-content: space-between; padding: 0 2px 0 24px; }
.layouts { flex: 1; display: flex; align-items: center; padding-left: 14px; color: #e8e8e8; font-size: 17px; }
.layouts a { padding: 0 15px 0 13px; }
.layouts .on { width: 87px; line-height: 35px; padding: 0; text-align: center; background: var(--slate); clip-path: polygon(15px 0, 100% 0, 72px 100%, 0 100%); font-size: 19px; font-weight: 700; margin: 0 -3px 8px 0; }
.layouts button { margin: 0 16px; }
.groups { display: flex; gap: 2px; }
.grp { display: flex; height: 36px; background: var(--slate); }
.grp.wide { margin-left: 4px; }
.grp.mid { margin-left: 2px; }
.grp button { width: 36px; color: #f0f0f0; font-weight: 500; font-size: 18px; }
.grp svg:not(.ar) { width: 24px; height: 24px; }
.grp .on { background: #648fc4; }
.grp .w24 { width: 24px; } .grp .w44 { width: 44px; } .grp .w46 { width: 46px; }
.grp .w80 { width: 80px; gap: 8px; font-size: 17px; } .grp .w100 { width: 100px; gap: 17px; }

/* Task bar */
.taskbar { height: 60px; flex: none; display: flex; background: linear-gradient(90deg, #1f1d1e 0 28%, #2a2628 36%, #222f49 42% 52%, #1f1f1f 58%); color: #f4f4f4; }
.start { width: 72px; }
.search { width: 432px; background: #f2f2f2; border: 2px solid #bcbcbc; display: flex; align-items: center; padding: 0 12px 0 16px; gap: 16px; }
.search input { flex: 1; min-width: 0; border: 0; background: none; padding: 0; font-size: 24px; }
.search input::placeholder { color: #333; opacity: 1; }
.apps { display: flex; padding-left: 10px; gap: 2px; }
.apps button { width: 73px; border-bottom: 3px solid #c9bdc0; padding-top: 3px; background-clip: content-box; }
.apps button.idle { border-color: transparent; width: 62px; margin-right: 4px; }
.apps svg { width: 36px; height: 36px; }
.apps .on { background: #565a63; background-clip: border-box; }
.appletter { font: 700 13px "Noto Sans", sans-serif; fill: #fff; }
.talk { font: 700 9px "Noto Sans", sans-serif; fill: #fbe100; }
.tiny { font: 700 8px "Noto Sans", sans-serif; fill: #fff; }
.badge { font: 700 15px "Noto Sans", sans-serif; fill: #fff; }
.tray { margin-left: auto; display: flex; align-items: center; gap: 14px; padding-right: 24px; white-space: nowrap; }
.weather { font-size: 22px; width: 194px; }
.ime { font: 26px/60px "Noto Sans", sans-serif; }
.tray time { line-height: 28px; text-align: center; width: 96px; font-size: 18px; }
.note { margin-left: 15px; }

/* Section view properties window, floating over the drawing */
.dialog { position: absolute; left: 369px; top: 264px; width: 1428px; height: 692px; background: #f0f0f0; color: #000; display: flex; flex-direction: column; padding: 0 10px; box-shadow: 0 4px 14px rgba(0, 0, 0, .5); }
.dialog header { height: 44px; background: #fff; margin: 0 -10px 11px; padding-left: 11px; display: flex; align-items: center; gap: 6px; }
.dialog header h1 { flex: 1; }
.dialog .winbtns { color: #000; }
.dialog .winbtns button { width: 71px; }
.dialog .winbtns .off { color: #bbb; }
.tabs { display: flex; align-items: flex-end; height: 31px; flex: none; }
.tabs button { height: 30px; padding: 0 5px; border: solid; border-width: 1px 2px 0 1px; border-color: #fff #777 #fff #fff; justify-content: flex-start; white-space: nowrap; }
.tabs button:nth-child(1) { width: 62px; }
.tabs button:nth-child(3) { width: 61px; }
.tabs button:nth-child(2) { width: 101px; }
.tabs button:nth-child(4) { width: 65px; border-right-color: #eee; }
.tabs .on { width: 63px; height: 33px; margin-bottom: -2px; background: #fff; z-index: 1; }
.tabs button:nth-child(6), .tabs button:nth-child(7) { width: 107px; padding: 0 4px; }
.page { height: 536px; background: #fafafa; border: 2px solid #fff; border-color: #fff #777 #777 #fff; box-shadow: inset 0 0 0 3px #f0f0f0; padding: 13px 16px 0 20px; }
.page label { display: block; width: max-content; }
.btn { background: #e1e1e1; border: 1px solid #adadad; height: 30px; }
.fields { display: grid; grid-template-columns: 523fr 544fr 63px 38px 128px; gap: 0 12px; padding: 0 22px 0 2px; align-items: end; font-weight: 300; }
.fields label { margin-bottom: 2px; }
.fields .f1 { padding-bottom: 3px; }
.combo { height: 29px; display: flex; align-items: center; position: relative; border: 1px solid #000; background: #fff; font-size: 18px; }
.band { width: 24px; height: 20px; }
.combo > .band { margin-left: 2px; }
.combo input { flex: 1; min-width: 0; border: 0; padding: 0 6px; height: 24px; background: none; }
.combo > button { width: 26px; height: 29px; margin: -1px; border: 1px solid #0078d7; background: #e5f1fb; }
.combo > button svg { width: 12px; height: 8px; }
.popup { position: absolute; z-index: 3; left: -1px; top: 27px; width: 670px; height: 162px; border: 1px solid #646464; background: #fff; }
.popup li { display: flex; align-items: center; height: 24px; padding-left: 15px; gap: 3px; background: repeating-linear-gradient(#777 0 1px, transparent 1px 3px) 15px 0 / 1px 24px no-repeat, repeating-linear-gradient(90deg, #777 0 1px, transparent 1px 3px) 15px 12px / 14px 1px no-repeat; }
.popup li:first-child { background-position: 15px 12px, 15px 12px; background-size: 1px 12px, 14px 1px; }
.popup li:last-child { background-size: 1px 12px, 14px 1px; }
.popup .band { margin-left: 15px; }
.popup span { padding: 0 2px; }
.popup .on span { background: #0078d7; color: #fff; }
.split2 { display: flex; }
.split2 .btn { flex: 1; }
.split2 .btn + .btn { border-left: 0; }
.fields .btn { height: 31px; }
.fields .add { margin-left: 3px; }
fieldset { margin: 14px 0 0; padding: 10px 18px 10px 21px; border: 1px solid #dcdcdc; font-weight: 300; min-width: 0; }
legend { padding: 0 2px 0 3px; margin-left: -15px; }
.pos { width: 275px; margin: 3px 0 19px; }
.listrow { display: flex; gap: 15px; }
.list { flex: 1; min-width: 0; }
.tablebox { height: 233px; overflow: hidden; background: #fff; border: 2px solid #777; border-right: 1px solid #e3e3e3; border-bottom: 1px solid #e3e3e3; }
table { table-layout: fixed; width: 100%; border-collapse: collapse; font-weight: 300; }
.c0 { width: 37px; } .c1 { width: 150px; } .cn { width: 100px; }
th { height: 34px; padding: 0 4px; text-align: left; font-weight: 300; white-space: nowrap; overflow: hidden; border-right: 1px solid #e3e3e3; border-bottom: 2px solid #fff; }
td { height: 25px; padding: 0 2px; border-right: 1px solid #000; border-bottom: 1px solid #000; white-space: nowrap; line-height: 23px; }
th:last-child, td:last-child { border-right: 0; }
.gray { color: #808080; }
.sty div { display: flex; align-items: center; }
.sty span { width: 72px; font-size: 18px; }
.ck { text-align: center; }
input[type="checkbox"] { appearance: none; width: 18px; height: 18px; margin: 0; border: 1px solid #666; background: #f2f2f2; vertical-align: middle; display: inline-grid; }
input[type="checkbox"]::after { content: ""; place-self: center; width: 12px; height: 10px; background: #1da64a; clip-path: polygon(0 50%, 18% 35%, 40% 62%, 84% 0, 100% 15%, 42% 100%); }
.hscroll { height: 25px; margin-top: 1px; background: #f0f0f0; display: flex; align-items: center; padding: 0 8px; gap: 10px; }
.hscroll svg { width: 8px; height: 12px; }
.hscroll i { width: 1046px; height: 24px; background: #cdcdcd; margin-right: auto; }
.side { width: 38px; padding-top: 86px; }
.side .btn { width: 38px; margin-bottom: 6px; }
.side .del { margin-top: 15px; }
.side svg { width: 20px; height: 24px; }
.side .del svg { height: 20px; }
.under { display: flex; align-items: center; margin: 17px 50px 0 0; gap: 12px; }
.under label { margin: -4px auto 0 -6px; }
.under input[type="checkbox"] { width: 20px; height: 20px; margin-top: -5px; background: #fff; border-color: #333; }
.under input[type="checkbox"]::after { background: #222; width: 14px; height: 12px; clip-path: polygon(0 50%, 10% 42%, 37% 80%, 90% 0, 100% 8%, 39% 100%); }
.under .btn { width: 318px; }
.dialog footer { display: flex; justify-content: flex-end; gap: 12px; margin: 21px 1px 0 0; }
.dialog footer .btn { width: 128px; height: 34px; }
.resize { position: absolute; right: 0; bottom: 0; width: 20px; height: 20px; }
```
